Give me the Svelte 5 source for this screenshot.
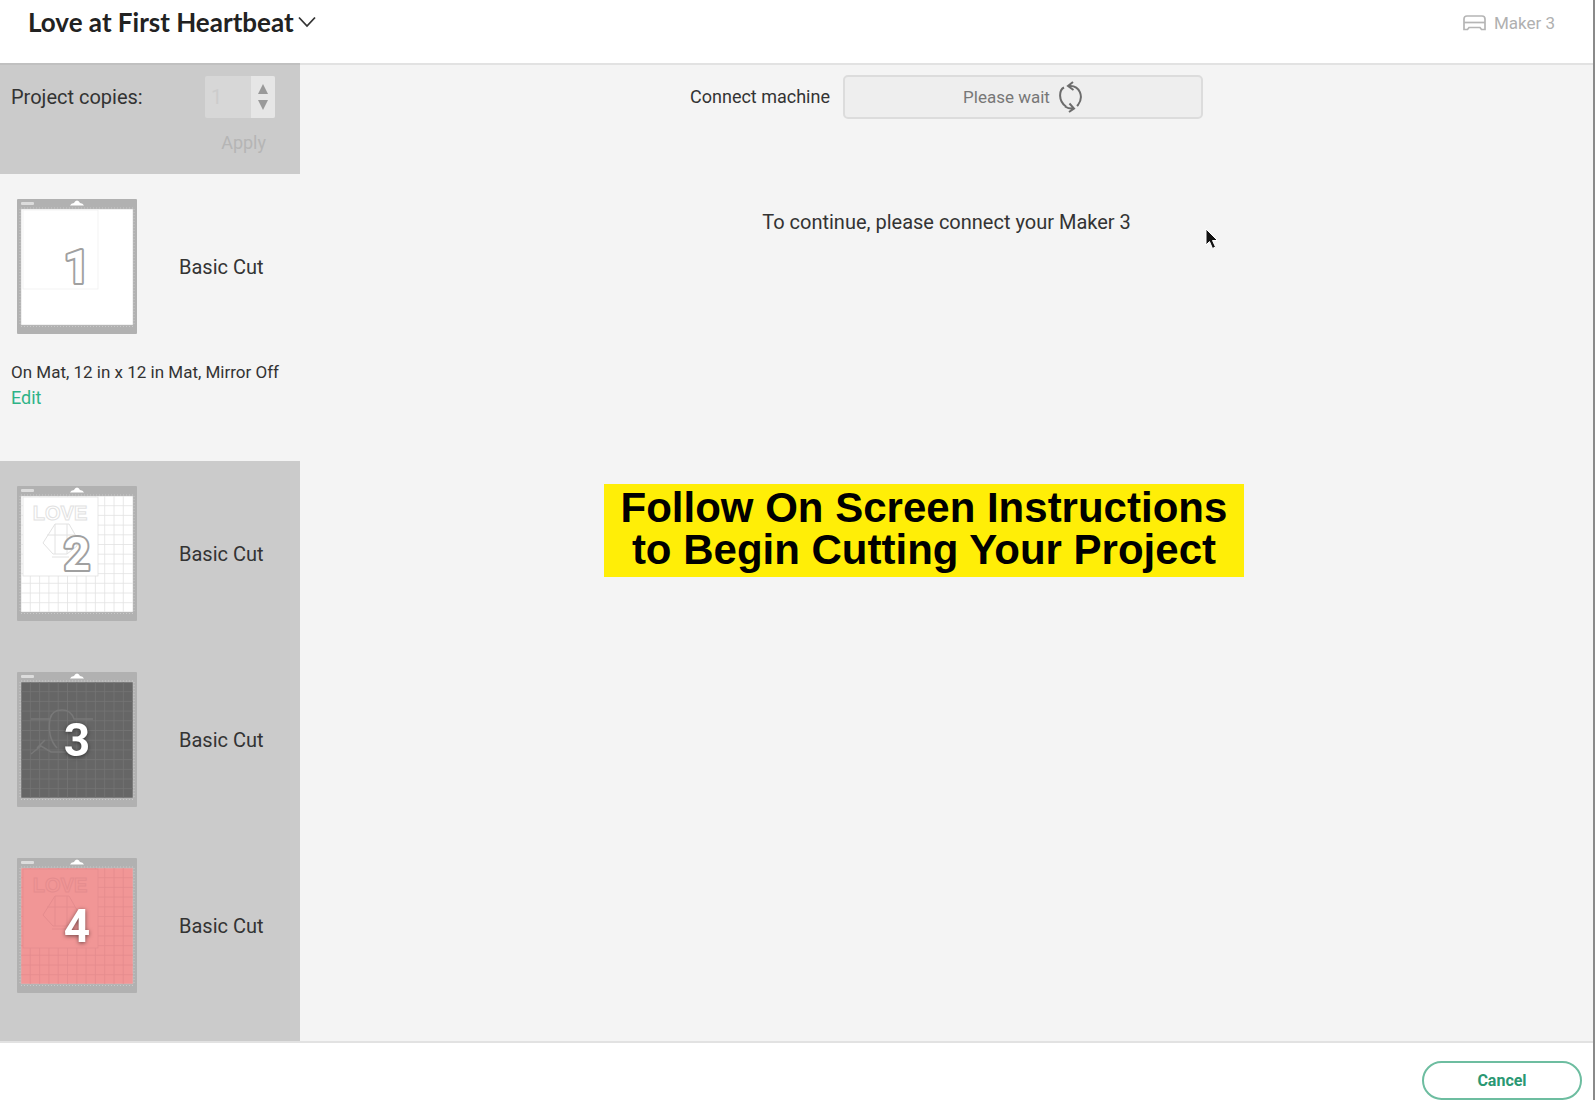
<script lang="ts">
  interface Mat {
    id: number
    cut: string
    color: string
    line: string
    grid: boolean
    art: 'none' | 'love' | 'banner'
  }

  const mats: Mat[] = [
    { id: 1, cut: 'Basic Cut', color: '#ffffff', line: '#f0f0f0', grid: false, art: 'none' },
    { id: 2, cut: 'Basic Cut', color: '#ffffff', line: '#e2e2e2', grid: true, art: 'love' },
    { id: 3, cut: 'Basic Cut', color: '#666666', line: '#757575', grid: true, art: 'banner' },
    { id: 4, cut: 'Basic Cut', color: '#f19696', line: '#e58c8e', grid: true, art: 'love' },
  ]

  const gridLines = Array.from({ length: 11 }, (_, i) => i + 1)

  let selected = $state(1)
  let copies = $state(1)
</script>

<div class="page">
  <header>
    <button class="title" type="button">
      <span>Love at First Heartbeat</span>
      <svg width="18" height="12" viewBox="0 0 18 12" aria-hidden="true">
        <path d="M1 1.5 L9 10 L17 1.5" fill="none" stroke="#333" stroke-width="1.8" />
      </svg>
    </button>
    <div class="machine">
      <svg width="23" height="16" viewBox="0 0 23 16" fill="none" stroke="#b5b5b5" stroke-width="1.7" aria-hidden="true">
        <path d="M4 1 H19 Q22 1 22 4 V14.500 H18.500 L17 12.500 H6 L4.500 14.500 H1 V4 Q1 1 4 1 Z" />
        <path d="M1 7.500 H22" />
      </svg>
      <span>Maker 3</span>
    </div>
  </header>

  <div class="body">
    <aside>
      <form class="copies" onsubmit={(e) => e.preventDefault()}>
        <label for="copies">Project copies:</label>
        <div class="stepper">
          <input id="copies" type="text" inputmode="numeric" bind:value={copies} disabled />
          <div class="arrows">
            <button type="button" aria-label="More copies" disabled>
              <svg width="10" height="10" viewBox="0 0 10 10"><path d="M5 0 L10 10 H0 Z" fill="#999" /></svg>
            </button>
            <button type="button" aria-label="Fewer copies" disabled>
              <svg width="10" height="10" viewBox="0 0 10 10"><path d="M0 0 H10 L5 10 Z" fill="#999" /></svg>
            </button>
          </div>
        </div>
        <button class="apply" type="submit" disabled>Apply</button>
      </form>

      {#each mats as mat (mat.id)}
        <section class="mat" class:active={selected === mat.id}>
          <button class="mat-row" type="button" onclick={() => (selected = mat.id)}>
            <svg class="thumb" width="120" height="135" viewBox="0 0 120 135" aria-hidden="true">
              <rect width="120" height="135" rx="1" fill="#b1b1b1" />
              <rect x="4" y="3" width="13" height="3" rx="1" fill="#dcdcdc" />
              <path d="M53 6.500 Q54 4 57 4 Q58 1.500 60 1.500 Q62 1.500 63 4 Q66 4 67 6.500 Z" fill="#fff" />
              <path d="M4 9 H116 M3 10 V127 M117 10 V127 M4 127.500 H116" stroke="#c9c9c9" stroke-width="1" stroke-dasharray="1 2" />
              <rect x="4" y="10" width="112" height="116" fill={mat.color} stroke="#c4c4c4" stroke-width="0.500" />
              {#if mat.grid}
                <g stroke={mat.line} stroke-width="0.800">
                  {#each gridLines as n (n)}
                    <path d="M{4 + n * 9.3} 10 V126 M4 {10 + n * 9.7} H116" />
                  {/each}
                </g>
              {/if}
              {#if mat.art !== 'banner'}
                <rect x="6" y="11" width="75" height="79" fill={mat.color} stroke={mat.line} stroke-width="0.800" />
              {/if}
              {#if mat.art === 'love'}
                <text class="love" x="43" y="34" text-anchor="middle" stroke={mat.line} fill="none">LOVE</text>
                <g fill="none" stroke={mat.line} stroke-width="1">
                  <path d="M38 38 H52 L60 52 V60 L50 68 H36 L26 57 Z" />
                  <path d="M38 38 V68 M50 38 V68 M30 49 H58 M35 71 H52" />
                </g>
              {:else if mat.art === 'banner'}
                <path
                  d="M14 47 H33 Q35 38 45 38 Q54 38 57 47 H76 M33 47 Q30 65 40 76 M14 82 L24 74 L34 80 H52 M20 76 L28 68"
                  fill="none" stroke="#787878" stroke-width="1.5"
                />
              {/if}
              <text class="num" class:outlined={mat.color === '#ffffff'} x="60" y="84" text-anchor="middle">{mat.id}</text>
            </svg>
            <span class="cut">{mat.cut}</span>
          </button>
          {#if selected === mat.id}
            <div class="details">
              <p>On Mat, 12 in x 12 in Mat, Mirror Off</p>
              <a href="#edit">Edit</a>
            </div>
          {/if}
        </section>
      {/each}
    </aside>

    <main>
      <div class="connect">
        <label for="machine">Connect machine</label>
        <button id="machine" type="button" disabled>
          <span>Please wait</span>
          <svg width="24" height="32" viewBox="0 0 24 32" fill="none" stroke="#6c6c6c" stroke-width="2" aria-hidden="true">
            <path d="M7 25.500 C-1 20 0 9 5 6.500" />
            <path d="M10 5 C21 4 25 16 19 24 L18 25" />
            <path d="M14 1 L9 5 L14.500 9" />
            <path d="M6 25.500 Q10 28 14 27.500 M10.500 22.500 L15 27.500 L10 31" />
          </svg>
        </button>
      </div>
      <p class="message">To continue, please connect your Maker 3</p>
    </main>
  </div>

  <footer>
    <button class="cancel" type="button">Cancel</button>
  </footer>

  <div class="callout">Follow On Screen Instructions to Begin Cutting Your Project</div>

  <svg class="cursor" width="14" height="22" viewBox="0 0 14 22" aria-hidden="true">
    <path d="M1 1 V17 L4.500 13.500 L7.500 20.500 L10.500 19 L7.500 12.500 H12.500 Z" fill="#111" stroke="#fff" stroke-width="1" />
  </svg>
</div>

<style>
  :global(body) {
    margin: 0;
  }

  .page {
    position: relative;
    display: grid;
    grid-template-rows: auto 1fr auto;
    min-height: 100vh;
    box-sizing: border-box;
    border-right: 2px solid #8a8a8a;
    background: #fff;
    color: #333;
    font-family: Roboto, 'Liberation Sans', sans-serif;
    font-size: 20px;
    line-height: 24px;
  }

  button,
  input {
    box-sizing: border-box;
    border: 0;
    padding: 0;
    background: none;
    color: inherit;
    font: inherit;
  }

  p {
    margin: 0;
  }

  header {
    display: flex;
    align-items: flex-start;
    justify-content: space-between;
    height: 63px;
    box-sizing: border-box;
    padding: 7px 38px 0 28px;
  }

  .title {
    display: flex;
    align-items: center;
    gap: 4px;
    color: #222;
    font-family: Lato, sans-serif;
    font-size: 26px;
    font-weight: 700;
    line-height: 30px;
  }

  .machine {
    display: flex;
    align-items: center;
    gap: 8px;
    color: #b0b0b0;
    font-size: 17px;
    line-height: 32px;
  }

  .body {
    display: grid;
    grid-template-columns: 300px 1fr;
    border-top: 2px solid #e2e2e2;
    border-bottom: 2px solid #e2e2e2;
    background: #f4f4f4;
  }

  aside {
    margin-top: -2px;
    background: #cbcbcb;
  }

  .copies {
    display: grid;
    grid-template-columns: 1fr auto;
    align-content: start;
    align-items: center;
    row-gap: 13px;
    height: 111px;
    box-sizing: border-box;
    padding: 11px 25px 0 11px;
    border-top: 2px solid #c0c0c0;
  }

  .stepper {
    display: flex;
    height: 42px;
    overflow: hidden;
    border-radius: 2px;
    background: #d7d7d7;
  }

  .stepper input {
    width: 46px;
    padding-left: 6px;
    color: #cccccc;
  }

  .arrows {
    display: flex;
    flex-direction: column;
    justify-content: center;
    gap: 6px;
    width: 24px;
    background: #e6e6e6;
  }

  .arrows button {
    display: flex;
    justify-content: center;
  }

  .apply {
    grid-column: 2;
    justify-self: end;
    padding-right: 9px;
    color: #b5b5b5;
    font-size: 18px;
  }

  .mat {
    padding: 25px 0 26px;
  }

  .mat.active {
    padding-bottom: 50px;
    background: #f4f4f4;
  }

  .mat-row {
    display: flex;
    align-items: center;
    gap: 42px;
    width: 100%;
    padding-left: 17px;
    text-align: left;
  }

  .thumb {
    display: block;
  }

  .love {
    font: 700 20px 'Liberation Sans', sans-serif;
  }

  .num {
    fill: #fff;
    font: 700 46px Roboto, sans-serif;
    filter: drop-shadow(0 1px 2px #0008);
  }

  .num.outlined {
    stroke: #a0a0a0;
    stroke-width: 4px;
    stroke-linejoin: round;
    paint-order: stroke;
    filter: none;
  }

  .details {
    padding: 26px 0 0 11px;
    font-size: 17px;
    line-height: 25px;
  }

  .details a {
    color: #2eb387;
    font-size: 18px;
    text-decoration: none;
  }

  main {
    display: flex;
    flex-direction: column;
    align-items: center;
    padding-top: 10px;
  }

  .connect {
    display: flex;
    align-items: center;
    gap: 13px;
    font-size: 18px;
  }

  .connect button {
    display: flex;
    align-items: center;
    justify-content: center;
    gap: 9px;
    width: 360px;
    height: 44px;
    border: 2px solid #dcdcdc;
    border-radius: 5px;
    background: #eee;
    color: #777;
    font-size: 17px;
  }

  .message {
    margin-top: 91px;
  }

  footer {
    display: flex;
    justify-content: flex-end;
    padding: 18px 11px 0;
  }

  .cancel {
    width: 160px;
    height: 39px;
    border: 2px solid #6dbda0;
    border-radius: 20px;
    color: #2a9873;
    font-size: 16px;
    font-weight: 700;
  }

  .callout {
    position: absolute;
    top: 484px;
    left: 58%;
    width: 640px;
    transform: translateX(-50%);
    box-sizing: border-box;
    padding: 3px 14px 6px;
    background: #ffee07;
    color: #000;
    font-family: 'Liberation Sans', Arial, sans-serif;
    font-size: 42px;
    font-weight: 700;
    line-height: 42px;
    text-align: center;
  }

  .cursor {
    position: absolute;
    top: 228px;
    left: 1205px;
  }
</style>
